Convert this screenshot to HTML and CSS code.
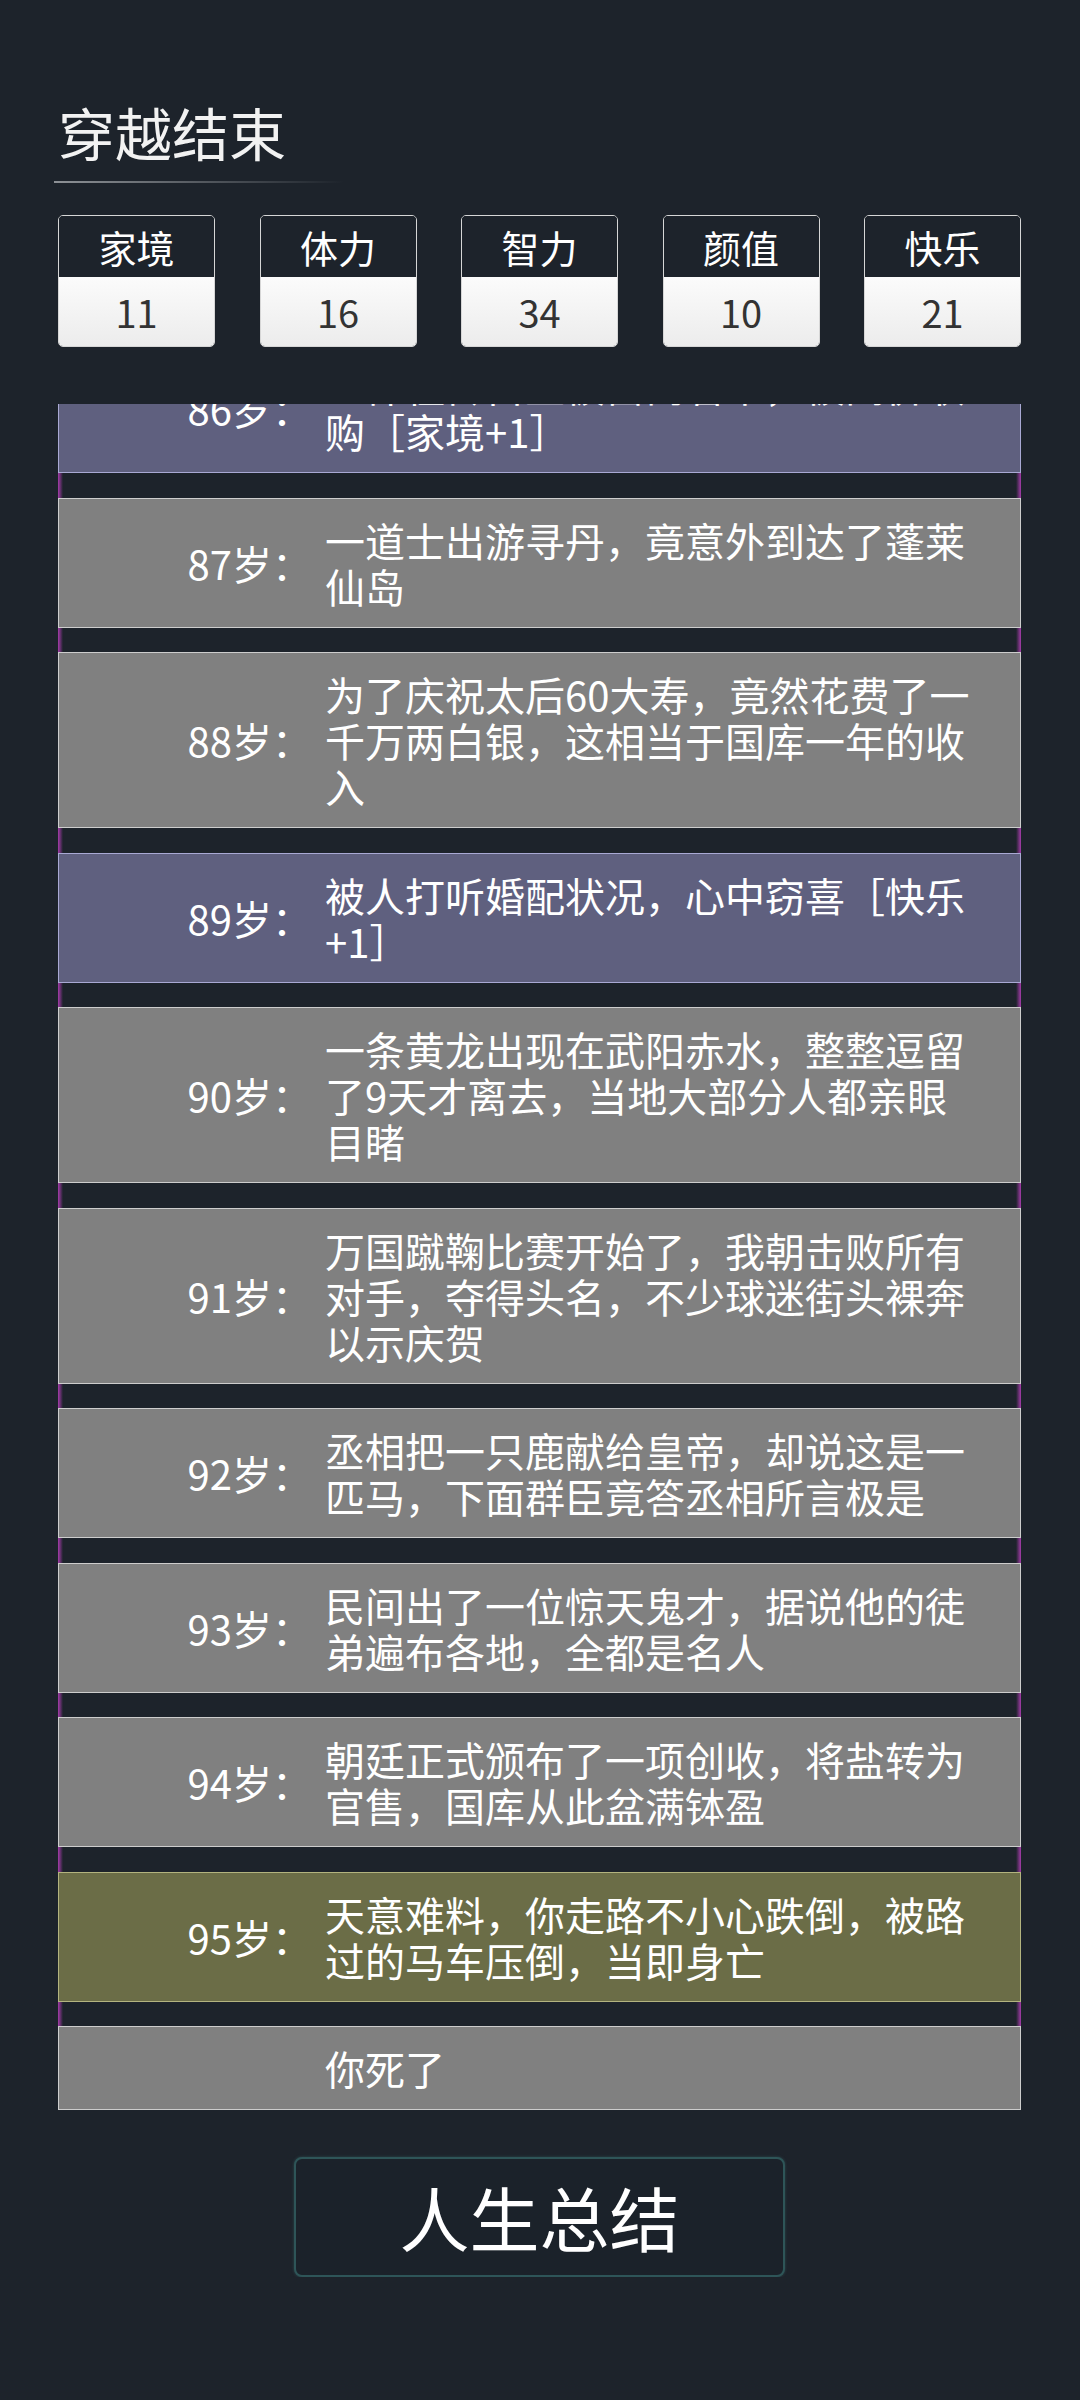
FILE: index.html
```html
<!DOCTYPE html>
<html lang="zh-CN">
<head>
    <meta charset="UTF-8">
    <meta name="viewport" content="width=device-width, initial-scale=1.0">
    <title>穿越结束</title>
    <link rel="stylesheet" href="styles.css">
</head>
<body>
    <div class="page">
        <h1 class="title">穿越结束</h1>
        <div class="title-line"></div>

        <div class="stats">
            <div class="stat">
                <div class="stat-name">家境</div>
                <div class="stat-value">11</div>
            </div>
            <div class="stat">
                <div class="stat-name">体力</div>
                <div class="stat-value">16</div>
            </div>
            <div class="stat">
                <div class="stat-name">智力</div>
                <div class="stat-value">34</div>
            </div>
            <div class="stat">
                <div class="stat-name">颜值</div>
                <div class="stat-value">10</div>
            </div>
            <div class="stat">
                <div class="stat-name">快乐</div>
                <div class="stat-value">21</div>
            </div>
        </div>

        <div class="log">
            <div class="entry good">
                <span class="age">86岁：</span>
                <span class="text">一件祖传古董被富商看中，被高价收购［家境+1］</span>
            </div>
            <div class="entry">
                <span class="age">87岁：</span>
                <span class="text">一道士出游寻丹，竟意外到达了蓬莱仙岛</span>
            </div>
            <div class="entry">
                <span class="age">88岁：</span>
                <span class="text">为了庆祝太后60大寿，竟然花费了一千万两白银，这相当于国库一年的收入</span>
            </div>
            <div class="entry good">
                <span class="age">89岁：</span>
                <span class="text">被人打听婚配状况，心中窃喜［快乐+1］</span>
            </div>
            <div class="entry">
                <span class="age">90岁：</span>
                <span class="text">一条黄龙出现在武阳赤水，整整逗留了9天才离去，当地大部分人都亲眼目睹</span>
            </div>
            <div class="entry">
                <span class="age">91岁：</span>
                <span class="text">万国蹴鞠比赛开始了，我朝击败所有对手，夺得头名，不少球迷街头裸奔以示庆贺</span>
            </div>
            <div class="entry">
                <span class="age">92岁：</span>
                <span class="text">丞相把一只鹿献给皇帝，却说这是一匹马，下面群臣竟答丞相所言极是</span>
            </div>
            <div class="entry">
                <span class="age">93岁：</span>
                <span class="text">民间出了一位惊天鬼才，据说他的徒弟遍布各地，全都是名人</span>
            </div>
            <div class="entry">
                <span class="age">94岁：</span>
                <span class="text">朝廷正式颁布了一项创收，将盐转为官售，国库从此盆满钵盈</span>
            </div>
            <div class="entry bad">
                <span class="age">95岁：</span>
                <span class="text">天意难料，你走路不小心跌倒，被路过的马车压倒，当即身亡</span>
            </div>
            <div class="entry">
                <span class="age"></span>
                <span class="text">你死了</span>
            </div>
        </div>

        <button class="summary">人生总结</button>
    </div>
</body>
</html>
```

FILE: styles.css
```css
body {
    margin: 0;
    background-color: #1d232b;
    font-family: "Noto Sans CJK SC", "Noto Sans", sans-serif;
    color: #fff;
}

.page {
    padding: 99px 59px 0 58px;
}

.title {
    margin: 0;
    font-size: 57px;
    font-weight: 400;
    line-height: 64px;
    color: #f2f2f2;
}

.title-line {
    width: 290px;
    height: 2px;
    margin: 18px 0 0 -4px;
    background: linear-gradient(to right, #8d9196, rgba(141, 145, 150, 0));
}

.stats {
    display: flex;
    justify-content: space-between;
    margin-top: 32px;
}

.stat {
    width: 155px;
    border: 1px solid #d6d6d6;
    border-radius: 5px;
    overflow: hidden;
}

.stat-name {
    height: 61px;
    line-height: 61px;
    text-align: center;
    font-size: 38px;
    background-color: #1d232b;
}

.stat-value {
    height: 69px;
    line-height: 69px;
    text-align: center;
    font-size: 38px;
    color: #333;
    background: linear-gradient(#fbfbfb, #ececec);
}

.log {
    display: flex;
    flex-direction: column;
    gap: 24.5px;
    height: 1706px;
    margin-top: 57px;
    overflow: hidden;
    background:
        linear-gradient(to right, #a63cab, rgba(166, 60, 171, 0) 5px),
        linear-gradient(to left, #a63cab, rgba(166, 60, 171, 0) 5px);
}

.entry {
    display: flex;
    align-items: center;
    flex-shrink: 0;
    padding: 18px 0;
    border: 1px solid #cdcdcd;
    background-color: #808080;
    font-size: 40px;
    line-height: 46px;
}

.entry:first-child {
    margin-top: -61px;
}

.entry.good {
    background-color: #5f607f;
    border-color: #a9a9d4;
}

.entry.bad {
    background-color: #6b6d47;
    border-color: #b3b47f;
}

.age {
    width: 253px;
    flex-shrink: 0;
    text-align: right;
}

.text {
    width: 655px;
    margin-left: 13px;
}

.summary {
    display: block;
    width: 491px;
    height: 120px;
    margin: 47px auto 0;
    border: 2px solid #2e5558;
    border-radius: 8px;
    background-color: #1b222a;
    box-shadow: 0 0 3px rgba(70, 130, 130, 0.4);
    color: #fff;
    font-family: "Noto Sans CJK SC", "Noto Sans", sans-serif;
    font-size: 70px;
    line-height: 1;
    cursor: pointer;
}
```
